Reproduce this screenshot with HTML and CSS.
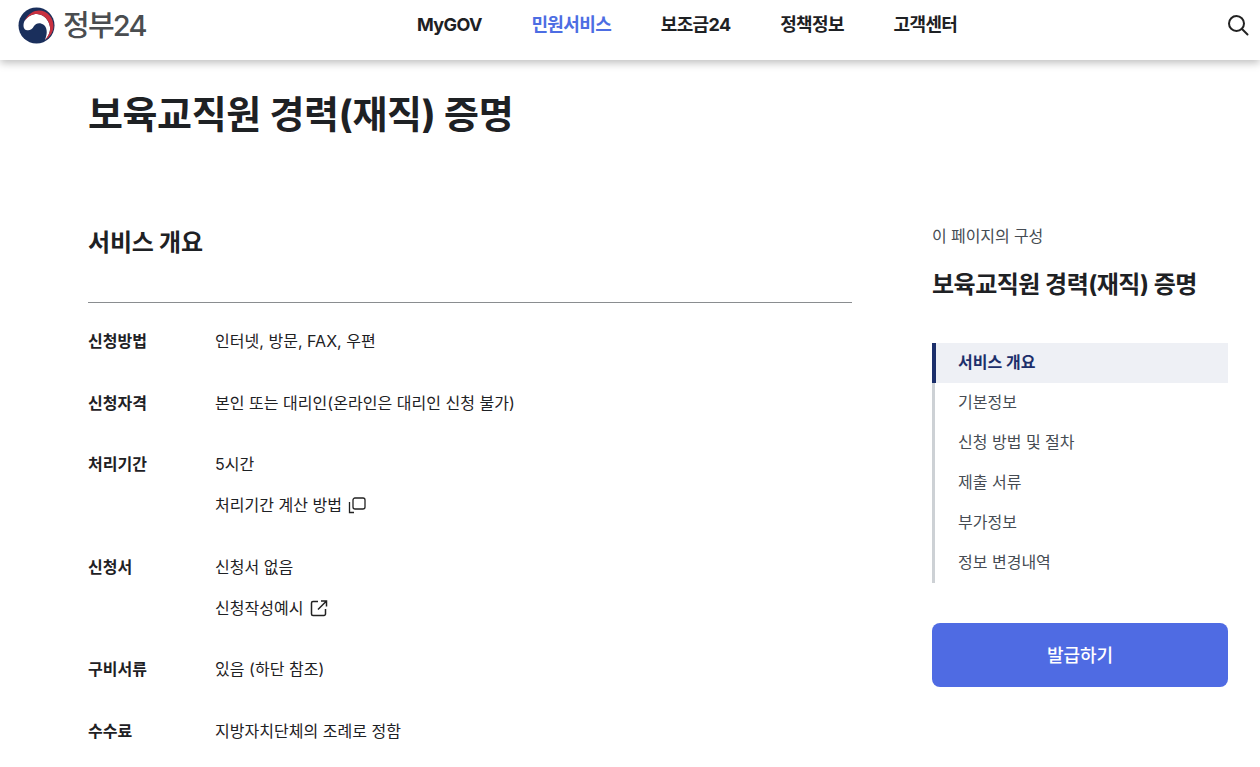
FILE: index.html
```html
<!DOCTYPE html>
<html lang="ko">
<head>
<meta charset="utf-8">
<title>보육교직원 경력(재직) 증명</title>
<link rel="stylesheet" href="styles.css">
</head>
<body>
<header class="header">
  <a class="logo">
    <svg class="logo-mark" width="37" height="37" viewBox="0 0 37 37">
      <circle cx="18.500" cy="18.500" r="18" fill="#1a2f5c"/>
      <path d="M6.500 14C10 9 14 7 19 7C26 7.500 31 13 32 20C32.500 24 31 29 27 33C29 28 30 22 26 18C22 15 18 16 16 19C14 23 11 24 8 23C5 22 5 17 6.500 14Z" fill="#fff"/>
      <path d="M6.500 14C10 6.500 16 3.500 21 3.500C29.500 3.500 35.500 11 35.500 19C35.500 25 32 30 27 33C31 28 32.500 24 32 20C31 13 26 7.500 19 7C14 7 10 9.500 6.500 14Z" fill="#c8303f"/>
    </svg>
    <span class="logo-text">정부24</span>
  </a>
  <nav class="nav">
    <a>MyGOV</a>
    <a class="active">민원서비스</a>
    <a>보조금24</a>
    <a>정책정보</a>
    <a>고객센터</a>
  </nav>
  <svg class="search" width="22" height="22" viewBox="0 0 22 22" fill="none" stroke="#222" stroke-width="2">
    <circle cx="9.500" cy="9.500" r="7.500"/>
    <path d="M15 15L20.500 20.500" stroke-linecap="round"/>
  </svg>
</header>

<main class="page">
  <h1 class="title">보육교직원 경력(재직) 증명</h1>
  <div class="columns">
    <section class="content">
      <h2 class="section-title">서비스 개요</h2>
      <dl class="info">
        <div class="row"><dt>신청방법</dt><dd><p>인터넷, 방문, FAX, 우편</p></dd></div>
        <div class="row"><dt>신청자격</dt><dd><p>본인 또는 대리인(온라인은 대리인 신청 불가)</p></dd></div>
        <div class="row"><dt>처리기간</dt><dd><p>5시간</p>
          <p class="link">처리기간 계산 방법
            <svg width="18" height="18" viewBox="0 0 18 18" fill="none" stroke="#222" stroke-width="1.300"><rect x="5" y="2" width="12" height="11" rx="2"/><path d="M1.500 6V16.500H6"/></svg>
          </p></dd></div>
        <div class="row"><dt>신청서</dt><dd><p>신청서 없음</p>
          <p class="link">신청작성예시
            <svg width="18" height="18" viewBox="0 0 18 18" fill="none" stroke="#222" stroke-width="1.500"><path d="M8 2.500H3A1.500 1.500 0 0 0 1.500 4V15A1.500 1.500 0 0 0 3 16.500H14A1.500 1.500 0 0 0 15.500 15V10"/><path d="M8 10.500L16 2.500M11 2H16.500V7.500"/></svg>
          </p></dd></div>
        <div class="row"><dt>구비서류</dt><dd><p>있음 (하단 참조)</p></dd></div>
        <div class="row"><dt>수수료</dt><dd><p>지방자치단체의 조례로 정함</p></dd></div>
      </dl>
    </section>
    <aside class="side">
      <p class="side-label">이 페이지의 구성</p>
      <h2 class="side-title">보육교직원 경력(재직) 증명</h2>
      <ul class="toc">
        <li class="current">서비스 개요</li>
        <li>기본정보</li>
        <li>신청 방법 및 절차</li>
        <li>제출 서류</li>
        <li>부가정보</li>
        <li>정보 변경내역</li>
      </ul>
      <button class="apply">발급하기</button>
    </aside>
  </div>
</main>
</body>
</html>
```
FILE: styles.css
```css
* { box-sizing: border-box; }
html, body { margin: 0; padding: 0; height: 767px; overflow: hidden; }
body { background: #fff; color: #1e2124; font-family: Inter, "Noto Sans CJK KR", sans-serif; }
.header { height: 60px; display: flex; align-items: center; padding: 0 11px 10px 18px; position: relative; box-shadow: 0 3px 8px rgba(0,0,0,.25); background: #fff; }
.logo { display: flex; align-items: center; gap: 8px; width: 399px; }
.logo-text { font-size: 29px; color: #4a4d50; letter-spacing: -1.800px; line-height: 1; font-weight: 500; }
.nav { display: flex; gap: 49.500px; font-size: 18px; line-height: 24px; font-weight: 700; color: #1e2124; letter-spacing: -.6px; }
.nav .active { color: #4d6de3; }
.search { margin-left: auto; }
.page { padding: 0 32px 0 88px; }
.title { margin: 0; padding-top: 26px; font-size: 38px; line-height: 56px; font-weight: 700; letter-spacing: -.4px; color: #1e2124; height: 142px; }
.columns { display: flex; justify-content: space-between; }
.content { width: 764px; }
.section-title { margin: 0; padding-top: 23px; height: 101px; font-size: 24px; line-height: 36px; font-weight: 700; letter-spacing: -.2px; border-bottom: 1px solid #8a8d90; }
.info { margin: 0; padding-top: 25px; }
.row { display: flex; margin-bottom: 35.500px; font-size: 16px; line-height: 26px; }
.row dt { width: 127px; font-weight: 700; }
.row dd { margin: 0; letter-spacing: .03px; }
.row p { margin: 0; }
.link { margin-top: 15px !important; display: flex; align-items: center; gap: 6px; }
.side { width: 296px; padding-top: 21px; }
.side-label { margin: 0; font-size: 16px; line-height: 26px; letter-spacing: -.1px; color: #464c53; }
.side-title { margin: 19px 0 0; font-size: 24px; line-height: 34px; font-weight: 700; letter-spacing: -.5px; }
.toc { list-style: none; margin: 41px 0 0; padding: 0; border-left: 3px solid #cdd1d5; }
.toc li { height: 40px; line-height: 38px; padding-left: 23px; font-size: 16px; color: #464c53; }
.toc .current { margin-left: -3px; padding-left: 22px; border-left: 4px solid #1c2f6b; background: #eef0f5; font-weight: 700; color: #1c2f6b; }
.apply { display: block; width: 100%; height: 64px; margin-top: 40px; padding: 0 0 3px; border: 0; border-radius: 8px; background: #4f6be3; color: #fff; font: 500 18px Inter, "Noto Sans CJK KR", sans-serif; }
```
